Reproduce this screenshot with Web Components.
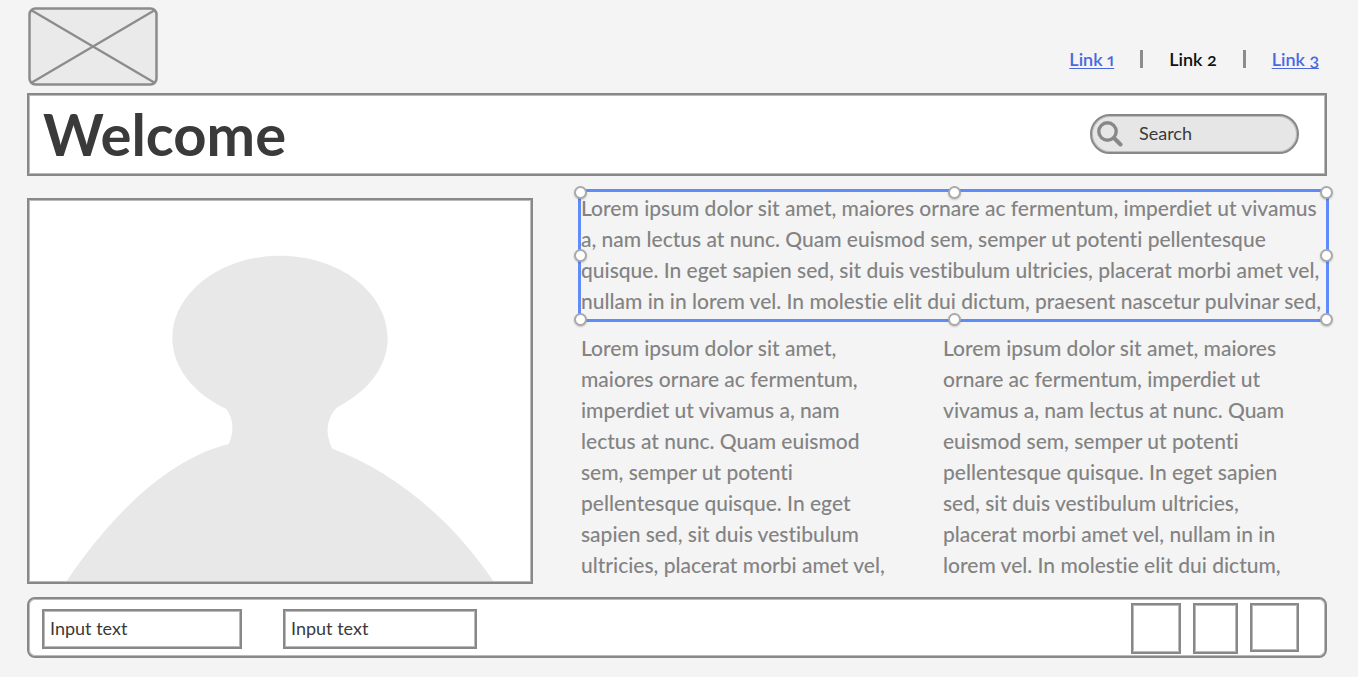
<!DOCTYPE html>
<html lang="en">
<head>
<meta charset="utf-8">
<meta name="viewport" content="width=device-width, initial-scale=1">
<title>Welcome</title>
<style>
  body { margin: 0; background: #f4f4f4; color: #3a3a3a; font-family: Lato, "Noto Sans", sans-serif; font-size: 18px;
    font-variant-ligatures: none; }
</style>
</head>
<body>
<welcome-page></welcome-page>
<script>
const define = (name, html) => {
  const template = document.createElement('template');
  template.innerHTML = '<style>*{box-sizing:border-box}</style>' + html;
  customElements.define(name, class extends HTMLElement {
    constructor() {
      super();
      this.attachShadow({ mode: 'open' }).append(template.content.cloneNode(true));
    }
  });
};

define('logo-placeholder', `
  <style>
    :host { display: block; width: 130px; height: 79px; }
    svg { display: block; width: 100%; height: 100%; }
  </style>
  <svg viewBox="0 0 130 79" role="img" aria-label="Logo">
    <rect x="1.5" y="1.5" width="127" height="76" rx="6" fill="#eaeaea" stroke="#8c8c8c" stroke-width="2.5"/>
    <path d="M3 3L127 76M127 3L3 76" stroke="#8c8c8c" stroke-width="2.3"/>
  </svg>`);

define('link-bar', `
  <style>
    :host { display: block; }
    nav { display: flex; align-items: center; gap: 26px; line-height: 24px; font-weight: 600;
      font-variant-numeric: oldstyle-nums proportional-nums; }
    a { color: #4a68e0; text-underline-offset: 2px; text-decoration-thickness: 1px; }
    a[aria-current] { color: #111; text-decoration: none; }
    i { width: 3px; height: 18px; background: #8c8c8c; }
  </style>
  <nav aria-label="Main">
    <a href="#1">Link 1</a><i></i><a href="#2" aria-current="page">Link 2</a><i></i><a href="#3">Link 3</a>
  </nav>`);

define('search-box', `
  <style>
    :host { display: block; }
    label { display: flex; align-items: center; gap: 16px; width: 209px; height: 40px; padding: 0 5px;
      border: 2px solid #888; border-radius: 20px; background: #e6e6e6; box-shadow: inset 0 0 0 1px #bbb; }
    svg { flex: none; width: 26px; height: 26px; }
    input { min-width: 0; flex: 1; padding: 0 0 2px; border: 0; outline: 0; background: none; color: #3a3a3a; font: inherit; line-height: 24px; }
  </style>
  <label>
    <svg viewBox="0 0 26 26" fill="none" stroke="#888" aria-hidden="true">
      <circle cx="10.5" cy="10.5" r="8.7" stroke-width="3.4"/><path d="M17 17l6.5 6.5" stroke-width="4" stroke-linecap="round"/>
    </svg>
    <input type="text" value="Search" aria-label="Search">
  </label>`);

define('title-bar', `
  <style>
    :host { display: flex; align-items: center; justify-content: space-between; height: 83px; padding: 0 26px 2px 14px;
      background: #fff; border: 2px solid #888; box-shadow: inset 0 0 0 1px #bbb; }
    h1 { margin: 0; font-size: 58px; line-height: 72px; font-weight: 700; }
  </style>
  <h1><slot></slot></h1><search-box></search-box>`);

define('portrait-placeholder', `
  <style>
    :host { display: block; height: 386px; background: #fff; border: 2px solid #888; position: relative; }
    :host::after { content: ""; position: absolute; inset: 0; box-shadow: inset 0 0 0 1px #bbb; }
    svg { display: block; width: 100%; height: 100%; }
  </style>
  <svg viewBox="27 30 1506 1146" preserveAspectRatio="none" role="img" aria-label="Portrait">
    <path fill="#e8e8e8" d="M138 1176C290 950 460 803 626 762C642 728 642 686 618 656C520 612 457 530 457 445C457 308 602 197 780 197S1103 308 1103 445C1103 530 1045 604 950 653C919 686 914 732 937 776C1110 838 1290 980 1422 1176Z"/>
  </svg>`);

define('text-block', `
  <style>
    :host { display: block; color: #838383; font-size: 21px; line-height: 31px; font-weight: 500; white-space: nowrap; }
    p { margin: 0; }
  </style>
  <p><slot></slot></p>`);

define('selection-frame', `
  <style>
    :host { display: block; position: relative; height: 133px; border: 3px solid #5f8bfb; }
    i { position: absolute; width: 13px; height: 13px; border: 2px solid #aaa; border-radius: 50%; background: #fff;
      box-shadow: 0 1px 2px #0003; }
    .l { left: -7px } .c { left: calc(50% - 6px) } .r { right: -7px }
    .t { top: -6px } .m { top: calc(50% - 7px) } .b { bottom: -7px }
  </style>
  <slot></slot>
  <i class="l t"></i><i class="c t"></i><i class="r t"></i><i class="l m"></i>
  <i class="r m"></i><i class="l b"></i><i class="c b"></i><i class="r b"></i>`);

define('input-bar', `
  <style>
    :host { display: flex; align-items: flex-start; height: 61px; padding: 4px 26px 0 13px; background: #fff;
      border: 2px solid #888; border-radius: 8px; box-shadow: inset 0 0 0 1px #bbb; }
    input, button { border: 2px solid #888; border-radius: 0; background: #fff; box-shadow: inset 0 0 0 1px #bbb; }
    .fields { display: flex; gap: 41px; padding-top: 6px; }
    input { width: 200px; height: 40px; padding: 0 6px 3px; color: #3a3a3a; font: inherit; }
    input + input { width: 194px; }
    .buttons { display: flex; gap: 12px; margin-left: auto; }
    button { width: 50px; height: 51px; padding: 0; }
    .narrow { width: 45px; }
    .short { width: 49px; height: 49px; }
  </style>
  <div class="fields">
    <input type="text" value="Input text" aria-label="First input">
    <input type="text" value="Input text" aria-label="Second input">
  </div>
  <div class="buttons">
    <button type="button" aria-label="First action"></button>
    <button type="button" class="narrow" aria-label="Second action"></button>
    <button type="button" class="short" aria-label="Third action"></button>
  </div>`);

define('welcome-page', `
  <style>
    :host { display: block; padding: 7px 31px 19px 27px; }
    header { display: flex; justify-content: space-between; align-items: center; padding: 0 8px 0 1px; }
    link-bar { padding-top: 25px; }
    title-bar { margin-top: 7px; }
    main { display: grid; grid-template-columns: 506fr 751fr; gap: 45px; margin: 13px -2px 13px 0; }
    portrait-placeholder { margin-top: 9px; }
    .columns { display: grid; grid-template-columns: 362fr 386fr; padding: 10px 0 0 3px; }
  </style>
  <header><logo-placeholder></logo-placeholder><link-bar></link-bar></header>
  <title-bar>Welcome</title-bar>
  <main>
    <portrait-placeholder></portrait-placeholder>
    <section>
      <selection-frame><text-block>Lorem ipsum dolor sit amet, maiores ornare ac fermentum, imperdiet ut vivamus<br>a, nam lectus at nunc. Quam euismod sem, semper ut potenti pellentesque<br>quisque. In eget sapien sed, sit duis vestibulum ultricies, placerat morbi amet vel,<br>nullam in in lorem vel. In molestie elit dui dictum, praesent nascetur pulvinar sed,</text-block></selection-frame>
      <div class="columns">
        <text-block>Lorem ipsum dolor sit amet,<br>maiores ornare ac fermentum,<br>imperdiet ut vivamus a, nam<br>lectus at nunc. Quam euismod<br>sem, semper ut potenti<br>pellentesque quisque. In eget<br>sapien sed, sit duis vestibulum<br>ultricies, placerat morbi amet vel,</text-block>
        <text-block>Lorem ipsum dolor sit amet, maiores<br>ornare ac fermentum, imperdiet ut<br>vivamus a, nam lectus at nunc. Quam<br>euismod sem, semper ut potenti<br>pellentesque quisque. In eget sapien<br>sed, sit duis vestibulum ultricies,<br>placerat morbi amet vel, nullam in in<br>lorem vel. In molestie elit dui dictum,</text-block>
      </div>
    </section>
  </main>
  <input-bar></input-bar>`);
</script>
</body>
</html>
